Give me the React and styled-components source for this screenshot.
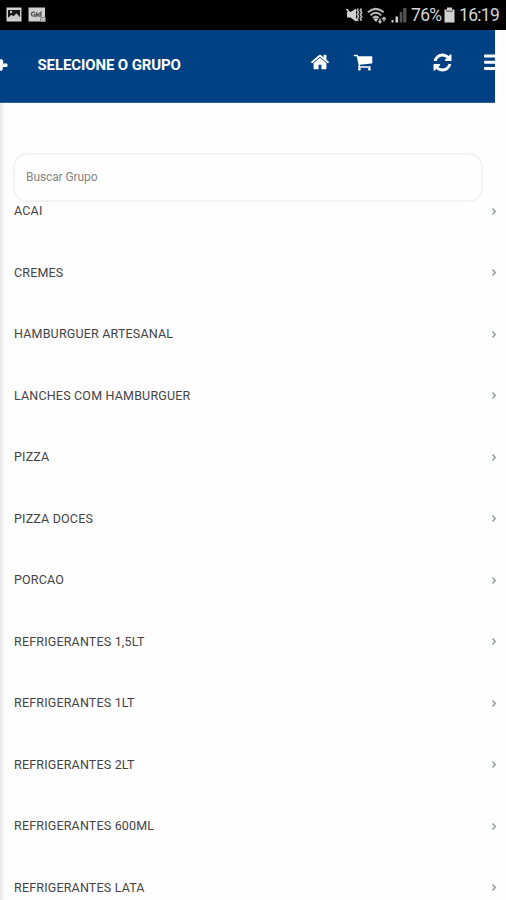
import styled, { createGlobalStyle } from "styled-components";

const groups = [
  "ACAI",
  "CREMES",
  "HAMBURGUER ARTESANAL",
  "LANCHES COM HAMBURGUER",
  "PIZZA",
  "PIZZA DOCES",
  "PORCAO",
  "REFRIGERANTES 1,5LT",
  "REFRIGERANTES 1LT",
  "REFRIGERANTES 2LT",
  "REFRIGERANTES 600ML",
  "REFRIGERANTES LATA",
];

const HomeIcon = () => (
  <svg width="20" height="20" viewBox="0 0 1792 1792" fill="currentColor">
    <path d="M1472 992v480q0 26-19 45t-45 19h-384v-384h-256v384h-384q-26 0-45-19t-19-45v-480q0-1 .5-3t.5-3l575-474 575 474q1 2 1 6zm223-69l-62 74q-8 9-21 11h-3q-13 0-21-7l-692-577-692 577q-12 8-24 7-13-2-21-11l-62-74q-8-10-7-23.5t11-21.5l719-599q32-26 76-26t76 26l244 204v-195q0-14 9-23t23-9h192q14 0 23 9t9 23v408l219 182q10 8 11 21.5t-7 23.5z" />
  </svg>
);

const CartIcon = () => (
  <svg width="20" height="20" viewBox="0 0 1792 1792" fill="currentColor">
    <path d="M704 1536q0 52-38 90t-90 38-90-38-38-90 38-90 90-38 90 38 38 90zm896 0q0 52-38 90t-90 38-90-38-38-90 38-90 90-38 90 38 38 90zm128-1088v512q0 24-16.5 42.5t-40.5 21.5l-1044 122q13 60 13 70 0 16-24 64h920q26 0 45 19t19 45-19 45-45 19h-1024q-26 0-45-19t-19-45q0-11 8-31.5t16-36 21.5-40 15.5-29.5l-177-823h-204q-26 0-45-19t-19-45 19-45 45-19h256q16 0 28.5 6.5t19.5 15.5 13 24.5 8 26 5.5 29.5 4.5 26h1201q26 0 45 19t19 45z" />
  </svg>
);

const RefreshIcon = () => (
  <svg width="21" height="21" viewBox="0 0 1792 1792" fill="currentColor">
    <path d="M1639 1056q0 5-1 7-64 268-268 434.5t-478 166.5q-146 0-282.5-55t-243.5-157l-129 129q-19 19-45 19t-45-19-19-45v-448q0-26 19-45t45-19h448q26 0 45 19t19 45-19 45l-137 137q71 66 161 102t187 36q134 0 250-65t186-179q11-17 53-117 8-23 30-23h192q13 0 22.5 9.5t9.5 22.5zm25-800v448q0 26-19 45t-45 19h-448q-26 0-45-19t-19-45 19-45l138-138q-148-137-349-137-134 0-250 65t-186 179q-11 17-53 117-8 23-30 23h-199q-13 0-22.5-9.5t-9.5-22.5v-7q65-268 270-434.5t480-166.5q146 0 284 55.5t245 156.5l130-129q19-19 45-19t45 19 19 45z" />
  </svg>
);

const MenuIcon = () => (
  <svg width="11" height="17" viewBox="0 0 11 17" fill="currentColor">
    <path d="M1 0.5h10v3H1q-1 0-1-1v-1q0-1 1-1zM1 6.8h10v3H1q-1 0-1-1v-1q0-1 1-1zM1 13h10v3H1q-1 0-1-1v-1q0-1 1-1z" />
  </svg>
);

// only the tail of the arrow is inside the screen
const BackIcon = () => (
  <svg width="8" height="14" viewBox="0 0 8 14" fill="currentColor">
    <path d="M0 1.5L1.5 1 3.2 2.6V5.5H6.5q1 0 1 1v1.6q0 1-1 1H2.8V11.3L1.5 13 0 12.5z" />
  </svg>
);

const PictureIcon = () => (
  <svg width="16" height="15" viewBox="0 0 16 15">
    <rect x="0.5" y="0.5" width="15" height="14" fill="#d2d2d2" />
    <path d="M2 3h12v7.5l-3.5-4-3 3-2-1.5L2 11z" fill="#161616" />
    <circle cx="5" cy="5" r="1.2" fill="#c4c4c4" />
    <path d="M2 11l3.5-3 2 1.5 3-3 3.5 4V12H2z" fill="#c8c8c8" />
  </svg>
);

const NoticeIcon = () => (
  <svg width="19" height="15" viewBox="0 0 19 15">
    <rect x="0.5" y="0.5" width="16.5" height="14" fill="#cfcfcf" />
    <path
      d="M7 5.4Q3.4 4.4 3.4 7t3.6 2V7.3H5.6M8.7 5v4l4.2-3.8V9H10.5"
      fill="none"
      stroke="#555"
      strokeWidth="1.3"
    />
    <path d="M12.5 10.5h5v4h-5z" fill="#bbb" stroke="#777" strokeWidth="0.7" />
  </svg>
);

const MuteIcon = () => (
  <svg width="17" height="16" viewBox="0 0 17 16">
    <path d="M1 5h3.5L10 1.5v13L4.5 10.5H1z" fill="#d0d0d0" />
    <path d="M1.2 3L11.4 13.5" stroke="#000" strokeWidth="0.9" />
    <path d="M0.5 2L11.5 14" stroke="#d0d0d0" strokeWidth="1.6" />
    <path
      d="M12.2 1.5l-1 2 1.3 2-1.3 2 1.3 2-1.3 2 1 2.3M15.5 1.5l-1.2 2 1.4 2-1.4 2 1.4 2-1.4 2 1.2 2.3"
      fill="none"
      stroke="#bdbdbd"
      strokeWidth="1.6"
    />
  </svg>
);

const WifiIcon = () => (
  <svg width="20" height="17" viewBox="0 0 20 17" fill="none">
    <g stroke="#bdbdbd" strokeWidth="2">
      <path d="M1 5.2Q8.8 -1.5 16.6 5.2" />
      <path d="M3.4 8.2Q8.8 3.4 14.2 8.2" />
      <path d="M5.9 11Q8.8 8.3 11.7 11" />
    </g>
    <path d="M9 15l-2.4-3q2.4-1.5 4.6 0z" fill="#d0d0d0" />
    <path
      d="M13 11.5v4M11.5 14l1.5 1.7 1.5-1.7M17 14.5v-4M15 12.4l2-2 2 2"
      stroke="#c8c8c8"
      strokeWidth="1.3"
    />
  </svg>
);

const SignalIcon = () => (
  <svg width="16" height="16" viewBox="0 0 16 16">
    <path d="M0.5 13h2v2.5h-2zM4.5 9.5h2.6v6H4.5z" fill="#d0d0d0" />
    <path d="M8.7 5h2.6v10.5H8.7zM12.2 1h3.2v14.5h-3.2z" fill="#555" />
  </svg>
);

const BatteryIcon = () => (
  <svg width="11" height="16" viewBox="0 0 11 16">
    <path d="M3 0.5h5v2h2.5v13H0.5v-13H3z" fill="#d2d2d2" />
    <path d="M2.2 3.5h6.6V5H2.2z" fill="#777" />
  </svg>
);

const ChevronIcon = () => (
  <svg width="6" height="9" viewBox="0 0 6 9" fill="none">
    <path d="M1.5 1.5L4.3 4.5 1.5 7.5" stroke="#929b9b" strokeWidth="1.5" />
  </svg>
);

const App = () => {
  return (
    <>
      <GlobalStyle />
      <Screen>
        <StatusBar>
          <Notices>
            <PictureIcon />
            <NoticeIcon />
          </Notices>
          <Indicators>
            <MuteIcon />
            <WifiIcon />
            <SignalIcon />
            <StatusText $width={29}>76%</StatusText>
            <BatteryIcon />
            <StatusText $width={41}>16:19</StatusText>
          </Indicators>
        </StatusBar>
        <Header>
          <Back aria-label="Voltar">
            <BackIcon />
          </Back>
          <Title>SELECIONE O GRUPO</Title>
          <Action $gap={23.5}>
            <HomeIcon />
          </Action>
          <Action $gap={59}>
            <CartIcon />
          </Action>
          <Action $gap={31}>
            <RefreshIcon />
          </Action>
          <Action $gap={0}>
            <MenuIcon />
          </Action>
        </Header>
        <Content>
          <Search placeholder="Buscar Grupo" />
          <List>
            {groups.map((group) => (
              <Item key={group}>
                <Label>{group}</Label>
                <ChevronIcon />
              </Item>
            ))}
          </List>
        </Content>
      </Screen>
    </>
  );
};

export default App;

const GlobalStyle = createGlobalStyle`
  * {
    box-sizing: border-box;
  }

  body {
    margin: 0;
    background: #fefefe;
    font-family: Roboto, "Liberation Sans", sans-serif;
  }

  svg {
    display: block;
    flex: none;
  }
`;

const Screen = styled.div`
  display: flex;
  flex-direction: column;
  width: 506px;
  height: 900px;
  overflow: hidden;
`;

const StatusBar = styled.div`
  display: flex;
  flex: none;
  align-items: center;
  justify-content: space-between;
  height: 30px;
  padding: 0 6px 0 5.5px;
  background: #000;
`;

const Notices = styled.div`
  display: flex;
  gap: 6px;
  padding-bottom: 1px;
`;

const Indicators = styled.div`
  display: flex;
  align-items: center;
  gap: 4px;
`;

const StatusText = styled.span`
  width: ${(props) => props.$width}px;
  color: #d4d4d4;
  font-size: 17.5px;
  line-height: 30px;
  letter-spacing: -0.7px;
  white-space: nowrap;
`;

const Header = styled.header`
  display: flex;
  flex: none;
  align-items: center;
  width: 495px;
  height: 73px;
  padding-bottom: 3px;
  border-bottom: 1px solid #2a5f98;
  background: #004184;
  color: #fff;
`;

const Back = styled.button`
  width: 37.5px;
  padding: 0;
  border: 0;
  background: none;
  color: inherit;
`;

const Title = styled.h1`
  flex: 1;
  margin: 0;
  font-size: 15px;
  font-weight: 700;
  letter-spacing: -0.12px;
`;

const Action = styled.div`
  margin-right: ${(props) => props.$gap}px;
  padding-bottom: 5px;
`;

const Content = styled.main`
  flex: 1;
  min-height: 0;
  padding: 50px 9px 0 13px;
  background: linear-gradient(to right, #e6e6e6, #f1f1f1 2px, #fefefe 5px);
`;

const Search = styled.input`
  display: block;
  width: 470px;
  height: 49px;
  padding: 0 11px 1px;
  border: 2px solid #f3f3f3;
  border-radius: 14px;
  outline: 0;
  background: #fefefe;
  font-family: inherit;
  font-size: 12px;
  letter-spacing: -0.1px;

  &::placeholder {
    color: #858585;
    opacity: 1;
  }
`;

const List = styled.ul`
  margin: 0;
  padding: 0 0 0 1px;
  list-style: none;
`;

const Item = styled.li`
  display: flex;
  align-items: flex-start;
  justify-content: space-between;
  height: 61.53px;

  svg {
    margin-top: 4.5px;
  }
`;

const Label = styled.span`
  color: #444;
  font-size: 12.5px;
  line-height: 17px;
  letter-spacing: 0.18px;
`;
